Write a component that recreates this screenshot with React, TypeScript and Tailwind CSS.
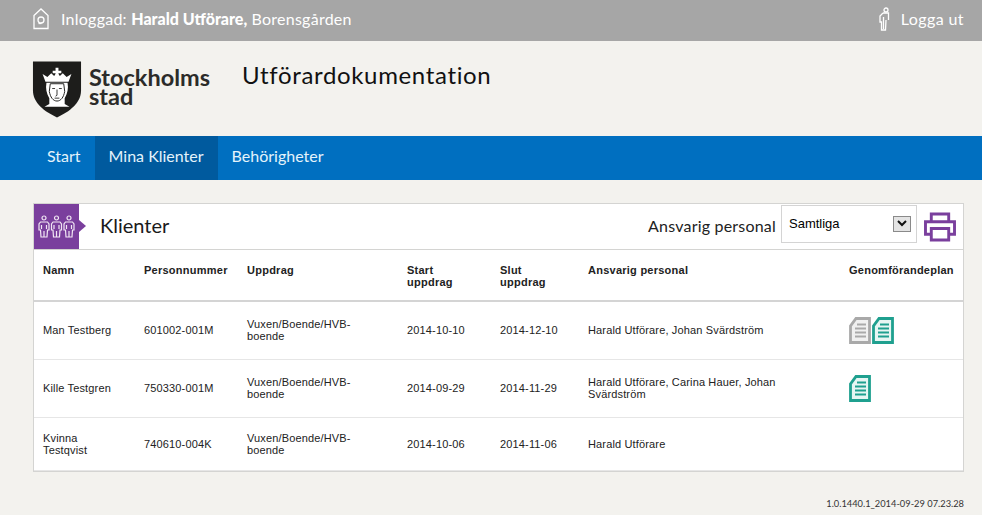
const clients = [
  { name: "Man Testberg", pnr: "601002-001M", start: "2014-10-10", end: "2014-12-10", staff: "Harald Utförare, Johan Svärdström", plans: ["gray", "teal"], h: "h-[59px]" },
  { name: "Kille Testgren", pnr: "750330-001M", start: "2014-09-29", end: "2014-11-29", staff: "Harald Utförare, Carina Hauer, Johan Svärdström", plans: ["teal"], h: "h-[58px]" },
  { name: "Kvinna Testqvist", pnr: "740610-004K", start: "2014-10-06", end: "2014-11-06", staff: "Harald Utförare", plans: [], h: "h-[53px]" },
];

function HouseIcon() {
  return (
    <svg width="16" height="22" viewBox="0 0 16 22" fill="none" stroke="white" strokeWidth="1.3">
      <path d="M1 7.5 8 1l7 6.5V20.5H1z" />
      <circle cx="8" cy="12" r="3" />
      <path d="M5.500 15.500h3" />
    </svg>
  );
}

function PersonIcon() {
  return (
    <svg width="12" height="24" viewBox="0 0 12 24" fill="none" stroke="white" strokeWidth="1.3">
      <circle cx="8" cy="3" r="2" />
      <path d="M5 6h5.500v7M5 6 2 9v6h1.500v8h4l.5-10" />
      <path d="M5.500 10v12" />
    </svg>
  );
}

function Shield() {
  return (
    <svg width="50" height="59" viewBox="0 0 52 60">
      <path d="M1 1h50v30c0 13-12 22-25 28C13 53 1 44 1 31z" fill="#1d1d1b" />
      <path d="M14 22 11 14l5 3 4-4 3 3 3-4 3 4 3-3 4 4 5-3-3 8z" fill="white" />
      <path d="M24.500 7.500h3v3h3v2.500h-3v2h-3v-2h-3v-2.500h3z" fill="white" />
      <path d="M15 23h22c1 6 0 11-3 16v6l5 3H13l5-3v-6c-3-5-4-10-3-16z" fill="white" />
      <path d="M19 24h14l1 8c-1 6-4 10-8 10s-7-4-8-10z" fill="white" stroke="#1d1d1b" strokeWidth="1" />
      <path d="M21 29h3M28 29h3M26 30v6l-1.500 1M23.500 39h5" stroke="#1d1d1b" strokeWidth="0.9" fill="none" />
    </svg>
  );
}

function Badge() {
  const person = (x: number) => (
    <g key={x} transform={`translate(${x} 0)`} fill="none" stroke="#f1e6f4" strokeWidth="1.2">
      <circle cx="6" cy="3" r="2" />
      <path d="M2.500 7h7l1.500 2v6h-1.500l-.5 7H3l-.5-7H1V9z" />
      <path d="M3.500 10v4M8.500 10v4M6 16v6" />
    </g>
  );
  return (
    <div className="relative flex w-[45px] h-[45px] shrink-0 items-center justify-center bg-[#7a3f9d]">
      <svg width="38" height="23" viewBox="0 0 38 23">
        {[0, 12.5, 25].map(person)}
      </svg>
      <span className="absolute left-[45px] top-[16px] border-y-[6px] border-l-[7px] border-y-transparent border-l-[#7a3f9d]" />
    </div>
  );
}

function PrinterIcon() {
  return (
    <svg width="34" height="30" viewBox="0 0 34 31" fill="none" stroke="#7a3f9d" strokeWidth="3">
      <path d="M8 10V2h18v8" />
      <path d="M8 23H2V10h30v13h-6" />
      <path d="M8 17h18v12H8z" />
    </svg>
  );
}

function PlanIcon({ color }: { color: string }) {
  const c = color === "teal" ? "#1fa08f" : "#a9a9a9";
  const bg = color === "teal" ? "#e6f6f3" : "#f0f0f0";
  return (
    <svg width="22" height="27" viewBox="0 0 22 27">
      <path d="M7 1.500h13.500v24H1.500V9z" fill={bg} stroke={c} strokeWidth="2.800" />
      <path d="M8 7.500h9M6 11.500h11M6 15.500h11M6 19.500h11" stroke={c} strokeWidth="2" />
    </svg>
  );
}

export default function App() {
  return (
    <div className="min-h-[515px] bg-[#f3f2ee] font-['Lato',sans-serif]">
      <div className="flex h-[41px] items-center justify-between bg-[#a6a6a6] pb-[4px] pl-[33px] pr-[18px] text-white text-[16px]">
        <div className="flex items-center gap-[12px]">
          <HouseIcon />
          <span className="tracking-[0.25px]">Inloggad: <b className="font-black tracking-normal">Harald Utförare,</b> Borensgården</span>
        </div>
        <div className="flex items-center gap-[11px]">
          <PersonIcon />
          <span className="tracking-[0.4px]">Logga ut</span>
        </div>
      </div>

      <div className="flex h-[95px] items-start pl-[33px]">
        <div className="mt-[19px] -ml-px flex w-[210px] items-center gap-[7px]">
          <Shield />
          <div className="-mt-[6px] text-[23.5px] leading-[19px] font-bold text-[#2b2b29]">Stockholms<br />stad</div>
        </div>
        <h1 className="mt-[19px] text-[24px] leading-[30px] tracking-[0.65px] text-[#111]">Utförardokumentation</h1>
      </div>

      <nav className="flex h-[44px] bg-[#006fc0] pl-[33px] text-[16px] text-[#e4f3fb]">
        <a className="flex items-center px-[14px] pb-[4px]">Start</a>
        <a className="flex items-center bg-[#005a9e] px-[14px] pb-[4px]">Mina Klienter</a>
        <a className="flex items-center px-[14px] pb-[4px]">Behörigheter</a>
      </nav>

      <main className="ml-[33px] mr-[18px] mt-[23px] border border-[#d4d4d2] bg-white">
        <div className="flex h-[45px] items-center">
          <Badge />
          <h2 className="ml-[21px] pb-[3px] text-[20px] text-[#1a1a1a]">Klienter</h2>
          <span className="ml-auto mr-[5px] pb-[2px] text-[16px] tracking-[0.2px] text-[#222]">Ansvarig personal</span>
          <div className="mb-[6px] flex h-[38px] w-[136px] items-center justify-between border border-[#d4d4d4] pl-[7px] pr-[5px] font-['Liberation_Sans',sans-serif] text-[13px] text-black">
            Samtliga
            <span className="flex h-[16px] w-[18px] items-center justify-center border border-[#8a8a8a] bg-[#e4e4e4]">
              <svg width="10" height="7" viewBox="0 0 10 7" fill="none" stroke="#111" strokeWidth="2"><path d="m1 1 4 4 4-4" /></svg>
            </span>
          </div>
          <div className="ml-[6px] mr-[6px]"><PrinterIcon /></div>
        </div>

        <table className="w-full table-fixed border-collapse font-['Liberation_Sans',sans-serif] text-[11px] leading-[12px] text-[#222]">
          <colgroup>
            <col className="w-[101px]" />
            <col className="w-[103px]" />
            <col className="w-[160px]" />
            <col className="w-[93px]" />
            <col className="w-[88px]" />
            <col className="w-[261px]" />
            <col />
          </colgroup>
          <thead>
            <tr className="h-[51px] border-y border-b-2 border-t-[#d4d4d2] border-b-[#d4d4d4] align-top font-bold tracking-[0.25px]">
              <th className="pl-[9px] pt-[14px] text-left">Namn</th>
              <th className="pl-[9px] pt-[14px] text-left">Personnummer</th>
              <th className="pl-[9px] pt-[14px] text-left">Uppdrag</th>
              <th className="pl-[9px] pt-[14px] text-left">Start<br />uppdrag</th>
              <th className="pl-[9px] pt-[14px] text-left">Slut<br />uppdrag</th>
              <th className="pl-[9px] pt-[14px] text-left">Ansvarig personal</th>
              <th className="pl-[9px] pt-[14px] text-left">Genomförandeplan</th>
            </tr>
          </thead>
          <tbody className="tracking-[0.15px]">
            {clients.map((c) => (
              <tr key={c.pnr} className={`${c.h} border-b border-[#e6e6e6]`}>
                <td className="pb-[1px] pl-[9px] pr-[20px]">{c.name}</td>
                <td className="pb-[1px] pl-[9px]">{c.pnr}</td>
                <td className="pb-[1px] pl-[9px] pr-[20px]">Vuxen/Boende/HVB-boende</td>
                <td className="pb-[1px] pl-[9px]">{c.start}</td>
                <td className="pb-[1px] pl-[9px]">{c.end}</td>
                <td className="pb-[1px] pl-[9px] pr-[60px]">{c.staff}</td>
                <td className="pl-[9px]">
                  <div className="flex gap-[1px]">
                    {c.plans.map((p) => <PlanIcon key={p} color={p} />)}
                  </div>
                </td>
              </tr>
            ))}
          </tbody>
        </table>
      </main>

      <div className="mt-[26px] pr-[18px] text-right text-[9.3px] leading-[12px] text-[#333]">1.0.1440.1_2014-09-29 07.23.28</div>
    </div>
  );
}
